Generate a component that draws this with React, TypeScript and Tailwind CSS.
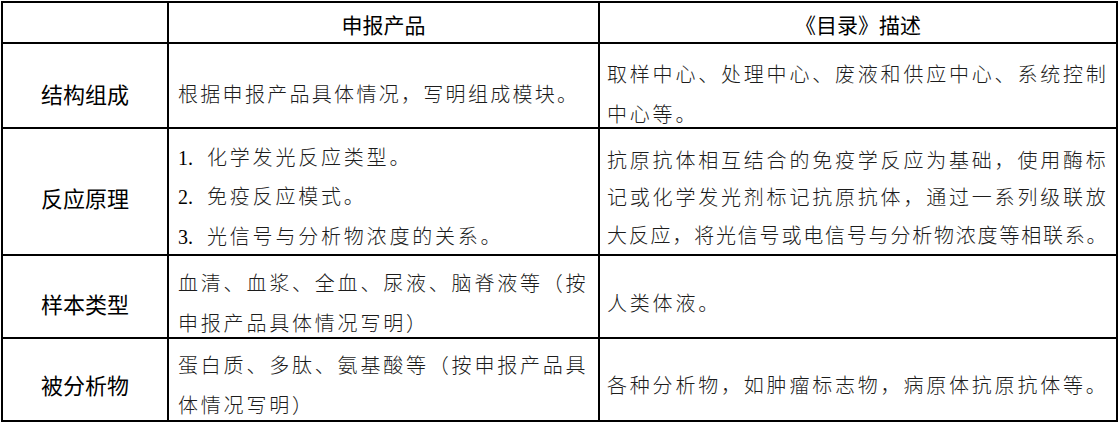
import React from 'react';

type Line = string | { num: string; text: string };

interface Row {
  label: string;
  product: Line[];
  catalog: string[];
  height: string;
  padTop: string;
  leading: string;
}

const rows: Row[] = [
  {
    label: '结构组成',
    product: ['根据申报产品具体情况，写明组成模块。'],
    catalog: ['取样中心、处理中心、废液和供应中心、系统控制', '中心等。'],
    height: 'h-[85px]',
    padTop: 'pt-[16px]',
    leading: 'leading-[40px]'
  },
  {
    label: '反应原理',
    product: [
      { num: '1.', text: '化学发光反应类型。' },
      { num: '2.', text: '免疫反应模式。' },
      { num: '3.', text: '光信号与分析物浓度的关系。' }
    ],
    catalog: [
      '抗原抗体相互结合的免疫学反应为基础，使用酶标',
      '记或化学发光剂标记抗原抗体，通过一系列级联放',
      '大反应，将光信号或电信号与分析物浓度等相联系。'
    ],
    height: 'h-[127px]',
    padTop: 'pt-[11px]',
    leading: 'leading-[37.5px]'
  },
  {
    label: '样本类型',
    product: ['血清、血浆、全血、尿液、脑脊液等（按', '申报产品具体情况写明）'],
    catalog: ['人类体液。'],
    height: 'h-[83px]',
    padTop: 'pt-[13px]',
    leading: 'leading-[40px]'
  },
  {
    label: '被分析物',
    product: ['蛋白质、多肽、氨基酸等（按申报产品具', '体情况写明）'],
    catalog: ['各种分析物，如肿瘤标志物，病原体抗原抗体等。'],
    height: 'h-[83px]',
    padTop: 'pt-[10px]',
    leading: 'leading-[40px]'
  }
];

// lines that the original squeezes a little to fit the cell
const squeezed = new Set([
  '大反应，将光信号或电信号与分析物浓度等相联系。',
  '根据申报产品具体情况，写明组成模块。'
]);

const cjk = "font-['Noto_Sans_CJK_SC',sans-serif]";

const BodyLine: React.FC<{ line: Line }> = ({ line }) => {
  if (typeof line === 'string') {
    const tight = line.startsWith('大反应') ? 'tracking-[1.8px]' : squeezed.has(line) ? 'tracking-[2.3px]' : 'tracking-[2.8px]';
    return <div className={`whitespace-nowrap ${tight}`}>{line}</div>;
  }
  return (
    <div className="whitespace-nowrap tracking-[2.8px]">
      <span className="inline-block w-[29px] tracking-normal text-black font-['Liberation_Serif',serif]">{line.num}</span>
      {line.text}
    </div>
  );
};

const App: React.FC = () => (
  <div className="bg-white w-[1119px] h-[424px] pl-[1px] pt-[1px]">
    <div className="grid grid-cols-[166px_431px_518px] border-l-2 border-t-2 border-black w-[1117px]">
      {/* header */}
      <div className="h-[41px] border-r-2 border-b-2 border-black" />
      <div className={`h-[41px] border-r-2 border-b-2 border-black flex items-center justify-center pt-[4px] text-[21px] text-black ${cjk}`}>
        申报产品
      </div>
      <div className={`h-[41px] border-r-2 border-b-2 border-black flex items-center justify-center pt-[4px] text-[21px] text-black ${cjk}`}>
        《目录》描述
      </div>

      {rows.map((row) => (
        <React.Fragment key={row.label}>
          <div
            className={`${row.height} ${row.padTop} border-r-2 border-b-2 border-black flex items-center justify-center text-[22px] text-black ${cjk}`}
          >
            {row.label}
          </div>
          <div
            className={`${row.height} ${row.padTop} ${row.leading} border-r-2 border-b-2 border-black flex flex-col justify-center pl-[9px] text-[20px] text-[#1c1c1c] font-light ${cjk}`}
          >
            {row.product.map((line, j) => (
              <BodyLine key={j} line={line} />
            ))}
          </div>
          <div
            className={`${row.height} ${row.padTop} ${row.leading} border-r-2 border-b-2 border-black flex flex-col justify-center pl-[7px] text-[20px] text-[#1c1c1c] font-light ${cjk}`}
          >
            {row.catalog.map((line, j) => (
              <BodyLine key={j} line={line} />
            ))}
          </div>
        </React.Fragment>
      ))}
    </div>
  </div>
);

export default App;
